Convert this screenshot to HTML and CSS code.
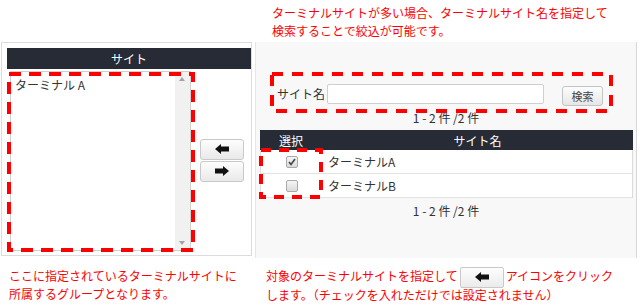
FILE: index.html
```html
<!DOCTYPE html>
<html lang="ja">
<head>
<meta charset="utf-8">
<link rel="stylesheet" href="styles.css">
</head>
<body>
<p class="note note-top">ターミナルサイトが多い場合、ターミナルサイト名を指定して<br>検索することで絞込が可能です。</p>
<div class="panels">
  <div class="left-panel">
    <div class="head">サイト</div>
    <div class="left-body">
      <div class="listbox-wrap">
        <div class="listbox">
          <div class="list-items">ターミナル A</div>
          <div class="scrollbar"><span class="tri-up"></span><span class="tri-down"></span></div>
        </div>
        <svg class="dash dash-list" width="188" height="180" viewBox="0 0 188 180"><rect x="2" y="2" width="184" height="176" fill="none" stroke="#f00" stroke-width="4" stroke-dasharray="12 8"/></svg>
      </div>
      <div class="arrows">
        <button class="btn-arrow" type="button"><svg width="14" height="10" viewBox="0 0 14 10"><path d="M0 5 L6 0 V2.5 H14 V7.5 H6 V10 Z" fill="#111"/></svg></button>
        <button class="btn-arrow" type="button"><svg width="14" height="10" viewBox="0 0 14 10"><path d="M14 5 L8 0 V2.5 H0 V7.5 H8 V10 Z" fill="#111"/></svg></button>
      </div>
    </div>
  </div>
  <div class="right-panel">
    <div class="search">
      <span class="search-label">サイト名</span>
      <span class="search-input"></span>
      <button class="btn-search" type="button">検索</button>
      <svg class="dash dash-search" width="343" height="41" viewBox="0 0 343 41"><rect x="2" y="2" width="339" height="37" fill="none" stroke="#f00" stroke-width="4" stroke-dasharray="11 9"/></svg>
    </div>
    <div class="pager">1 - 2 件 /2 件</div>
    <div class="grid">
      <div class="grid-row grid-head"><div class="col-sel">選択</div><div class="col-name">サイト名</div></div>
      <div class="grid-row"><div class="col-sel"><span class="cb checked"><svg width="8" height="8" viewBox="0 0 8 8"><path d="M1 4 L3 6.5 L7 1" fill="none" stroke="#444" stroke-width="1.6"/></svg></span></div><div class="col-name">ターミナルA</div></div>
      <div class="grid-row"><div class="col-sel"><span class="cb"></span></div><div class="col-name">ターミナルB</div></div>
      <svg class="dash dash-cb" width="64" height="51" viewBox="0 0 64 51"><rect x="2" y="2" width="60" height="47" fill="none" stroke="#f00" stroke-width="4" stroke-dasharray="10 8"/></svg>
    </div>
    <div class="pager pager-bottom">1 - 2 件 /2 件</div>
  </div>
</div>
<div class="notes-bottom">
  <p class="note note-left">ここに指定されているターミナルサイトに<br>所属するグループとなります。</p>
  <p class="note note-right">対象のターミナルサイトを指定して<span class="inline-btn"><svg width="14" height="10" viewBox="0 0 14 10"><path d="M0 5 L6 0 V2.5 H14 V7.5 H6 V10 Z" fill="#111"/></svg></span>アイコンをクリック<br>します。（チェックを入れただけでは設定されません）</p>
</div>
</body>
</html>
```

FILE: styles.css
```css
* { box-sizing: border-box; }

body {
  margin: 0;
  width: 644px;
  height: 307px;
  overflow: hidden;
  background: #fff;
  font-family: "Noto Sans CJK JP", "Noto Sans", sans-serif;
  font-size: 12px;
  color: #333;
}

.note {
  margin: 0;
  color: #f00;
  font-size: 12px;
  line-height: 18px;
  white-space: nowrap;
}

.note-top {
  padding: 4px 0 0 272px;
}

.panels {
  display: flex;
  align-items: flex-start;
  margin-top: 2px;
  height: 216px;
}

.left-panel {
  margin-left: 1px;
  width: 251px;
  height: 214px;
  border: 1px solid #dcdcdc;
  padding: 5px 0 0 5px;
  display: flex;
  flex-direction: column;
  background: #fff;
}

.head {
  height: 21px;
  line-height: 21px;
  background: #262b36;
  color: #fff;
  text-align: center;
}

.left-body {
  display: flex;
  align-items: center;
}

.listbox-wrap {
  position: relative;
  margin: 2px 0 0 3px;
  width: 181px;
  height: 180px;
}

.listbox {
  height: 100%;
  border: 1px solid #cfcfcf;
  background: #fff;
  display: flex;
}

.list-items {
  flex: 1;
  padding: 4px 4px 0;
  line-height: 18px;
  color: #333;
}

.scrollbar {
  position: relative;
  width: 15px;
  background: #f1f1f1;
}

.tri-up, .tri-down {
  position: absolute;
  left: 4px;
  width: 0;
  height: 0;
  border-left: 3.5px solid transparent;
  border-right: 3.5px solid transparent;
}

.tri-up {
  top: 5px;
  border-bottom: 4px solid #a3a3a3;
}

.tri-down {
  bottom: 5px;
  border-top: 4px solid #a3a3a3;
}

.dash {
  position: absolute;
  pointer-events: none;
}

.dash-list {
  left: -3px;
  top: 1px;
}

.arrows {
  display: flex;
  flex-direction: column;
  gap: 1px;
  margin-left: 9px;
}

.btn-arrow {
  width: 44px;
  height: 21px;
  padding: 0;
  margin: 0;
  border: 1px solid #c9c9c9;
  border-radius: 3px;
  background: linear-gradient(#fdfdfd, #e9e9e9);
  display: flex;
  align-items: center;
  justify-content: center;
}

.right-panel {
  margin-left: 3px;
  width: 382px;
  height: 216px;
  background: #f8f8f8;
  border-left: 1px solid #e6e6e6;
  border-right: 1px solid #d8d8d8;
  padding-top: 42px;
}

.search {
  position: relative;
  display: flex;
  align-items: flex-start;
  margin-left: 21px;
  height: 22px;
}

.search-label {
  width: 50px;
  line-height: 20px;
  color: #333;
}

.search-input {
  width: 217px;
  height: 20px;
  border: 1px solid #cfcfcf;
  border-radius: 2px;
  background: #fff;
}

.btn-search {
  margin: 2px 0 0 18px;
  width: 41px;
  height: 20px;
  padding: 0;
  border: 1px solid #c4c4c4;
  border-radius: 3px;
  background: linear-gradient(#fdfdfd, #e6e6e6);
  font-family: "Noto Sans CJK JP", sans-serif;
  font-size: 11px;
  color: #444;
  line-height: 18px;
}

.dash-search {
  left: -7px;
  top: -12px;
}

.pager {
  margin-top: 4px;
  text-align: center;
  line-height: 16px;
  color: #333;
}

.pager-bottom {
  margin-top: 5px;
}

.grid {
  position: relative;
  margin: 4px 0 0 4px;
  width: 373px;
  border-left: 1px solid #dcdcdc;
  border-right: 1px solid #dcdcdc;
  background: #fff;
}

.grid-row {
  display: grid;
  grid-template-columns: 61px 1fr;
  height: 24px;
  border-bottom: 1px solid #e2e2e2;
  align-items: center;
}

.grid-row.grid-head {
  height: 20px;
  background: #262b36;
  color: #fff;
  border-bottom: none;
  margin: 0 -1px;
  grid-template-columns: 62px 1fr;
}

.grid-head .col-sel,
.grid-head .col-name {
  text-align: center;
}

.col-sel {
  display: flex;
  justify-content: center;
}

.grid-head .col-sel {
  display: block;
}

.col-name {
  padding-left: 6px;
}

.grid-head .col-name {
  padding-left: 0;
}

.cb {
  width: 12px;
  height: 12px;
  border: 1px solid #a9a9a9;
  border-radius: 2px;
  background: linear-gradient(#f6f6f6, #dadada);
  display: flex;
  align-items: center;
  justify-content: center;
}

.dash-cb {
  left: -2px;
  top: 18px;
}

.notes-bottom {
  display: flex;
  margin-top: 9px;
}

.note-left {
  width: 266px;
  padding-left: 9px;
}

.inline-btn {
  display: inline-flex;
  align-items: center;
  justify-content: center;
  vertical-align: middle;
  width: 44px;
  height: 21px;
  margin: -3px 2px -2px 2px;
  border: 1px solid #c9c9c9;
  border-radius: 2px;
  background: linear-gradient(#fdfdfd, #ebebeb);
}
```
